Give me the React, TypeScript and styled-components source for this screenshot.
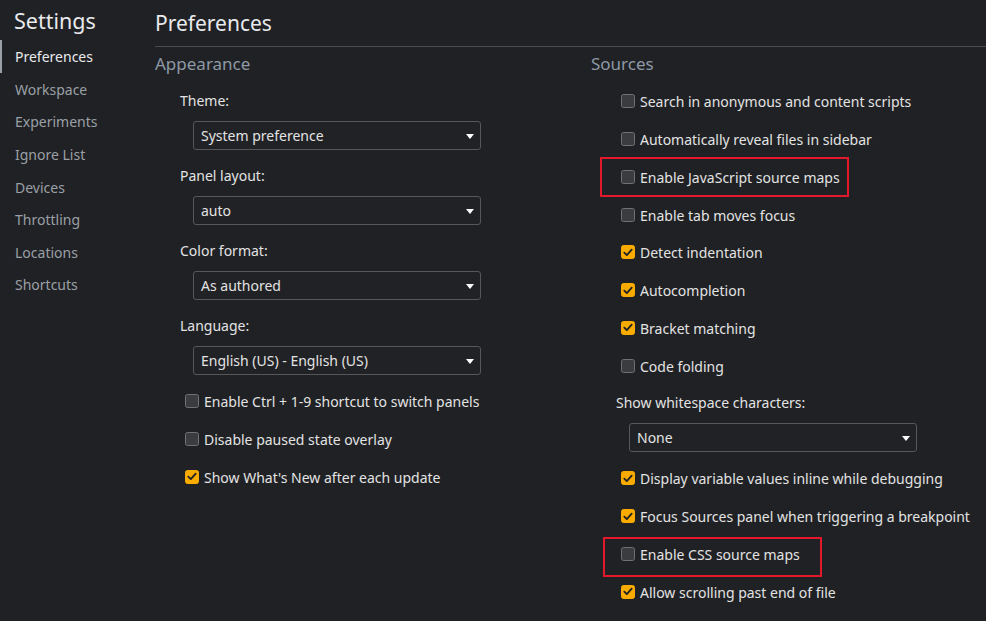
import React from "react";
import styled, { createGlobalStyle } from "styled-components";

const FONT = `"Noto Sans", "Open Sans", sans-serif`;

const Global = createGlobalStyle`
  html, body { margin: 0; padding: 0; background: #202124; }
  body { font-family: ${FONT}; color: #e3e3e3; overflow: hidden; }
  * { box-sizing: border-box; }
`;

const Page = styled.div`
  display: flex;
  width: 986px;
  height: 621px;
  background: #202124;
  overflow: hidden;
`;

const Sidebar = styled.nav`
  width: 155px;
  flex: none;
  display: flex;
  flex-direction: column;
`;

const SidebarTitle = styled.div`
  height: 40px;
  padding-left: 14px;
  font-size: 21.5px;
  line-height: 42px;
  color: #e8eaed;
`;

const NavItem = styled.div<{ $active?: boolean }>`
  height: 32.57px;
  display: flex;
  align-items: center;
  padding-left: 13px;
  padding-top: 1px;
  font-size: 14px;
  color: ${(p) => (p.$active ? "#e8eaed" : "#9aa0a6")};
  border-left: 2px solid ${(p) => (p.$active ? "#9aa0a6" : "transparent")};
`;

const Main = styled.main`
  flex: 1;
  display: flex;
  flex-direction: column;
`;

const Header = styled.div`
  height: 47px;
  border-bottom: 1px solid #4a4c50;
  font-size: 21px;
  line-height: 46px;
  color: #e8eaed;
`;

const Columns = styled.div`
  display: grid;
  grid-template-columns: 436px 1fr;
`;

const Column = styled.section`
  display: flex;
  flex-direction: column;
`;

const SectionTitle = styled.div`
  height: 34px;
  font-size: 17px;
  line-height: 34px;
  color: #8d99a6;
`;

const FieldLabel = styled.div<{ $top: number }>`
  margin-top: ${(p) => p.$top}px;
  margin-left: 25px;
  height: 20px;
  line-height: 20px;
  font-size: 14px;
  color: #e3e3e3;
`;

const SelectBox = styled.div<{ $indent: number }>`
  margin-top: 10px;
  margin-left: ${(p) => p.$indent}px;
  width: 288px;
  height: 29px;
  border: 1px solid #55575b;
  border-radius: 3px;
  background: #212225;
  display: flex;
  align-items: center;
  justify-content: space-between;
  padding: 0 6px 0 7px;
  font-size: 14px;
  color: #e3e3e3;
`;

const Arrow = styled.span`
  width: 0;
  height: 0;
  border-left: 4px solid transparent;
  border-right: 4px solid transparent;
  border-top: 5px solid #ffffff;
  margin-top: 1px;
`;

const CheckList = styled.div<{ $top: number }>`
  margin-top: ${(p) => p.$top}px;
  display: flex;
  flex-direction: column;
`;

const Row = styled.label`
  position: relative;
  height: 37.75px;
  display: flex;
  align-items: center;
  padding-left: 30px;
  font-size: 14px;
  color: #e3e3e3;
  white-space: nowrap;
`;

const RowText = styled.span`
  padding-top: 2px;
`;

const Box = styled.span<{ $checked?: boolean }>`
  width: 14px;
  height: 14px;
  flex: none;
  margin-right: 5px;
  margin-top: 1px;
  border-radius: 2.5px;
  border: 1px solid ${(p) => (p.$checked ? "#f9ab00" : "#6f7175")};
  background: ${(p) => (p.$checked ? "#f9ab00" : "#3b3c3f")};
  display: flex;
  align-items: center;
  justify-content: center;
`;

const Highlight = styled.span`
  position: absolute;
  border: 2px solid #e3192b;
  pointer-events: none;
`;

type Hl = { left: number; top: number; width: number; height: number };

function Check({
  label,
  checked,
  hl,
}: {
  label: string;
  checked?: boolean;
  hl?: Hl;
}) {
  return (
    <Row>
      <Box $checked={checked}>
        {checked && (
          <svg width="10" height="9" viewBox="0 0 10 9">
            <path
              d="M1.3 4.6 L3.8 7.1 L8.7 1.6"
              fill="none"
              stroke="#202124"
              strokeWidth="1.8"
              strokeLinecap="round"
              strokeLinejoin="round"
            />
          </svg>
        )}
      </Box>
      <RowText>{label}</RowText>
      {hl && <Highlight style={hl} />}
    </Row>
  );
}

function Select({ value, indent }: { value: string; indent: number }) {
  return (
    <SelectBox $indent={indent}>
      <span>{value}</span>
      <Arrow />
    </SelectBox>
  );
}

const nav = [
  "Preferences",
  "Workspace",
  "Experiments",
  "Ignore List",
  "Devices",
  "Throttling",
  "Locations",
  "Shortcuts",
];

export default function App() {
  return (
    <>
      <Global />
      <Page>
        <Sidebar>
          <SidebarTitle>Settings</SidebarTitle>
          {nav.map((n, i) => (
            <NavItem key={n} $active={i === 0}>
              {n}
            </NavItem>
          ))}
        </Sidebar>
        <Main>
          <Header>Preferences</Header>
          <Columns>
            <Column>
              <SectionTitle>Appearance</SectionTitle>
              <FieldLabel $top={10}>Theme:</FieldLabel>
              <Select value="System preference" indent={38} />
              <FieldLabel $top={16}>Panel layout:</FieldLabel>
              <Select value="auto" indent={38} />
              <FieldLabel $top={16}>Color format:</FieldLabel>
              <Select value="As authored" indent={38} />
              <FieldLabel $top={16}>Language:</FieldLabel>
              <Select value="English (US) - English (US)" indent={38} />
              <CheckList $top={7}>
                <Check label="Enable Ctrl + 1-9 shortcut to switch panels" />
                <Check label="Disable paused state overlay" />
                <Check label="Show What's New after each update" checked />
              </CheckList>
            </Column>
            <Column>
              <SectionTitle>Sources</SectionTitle>
              <CheckList $top={1}>
                <Check label="Search in anonymous and content scripts" />
                <Check label="Automatically reveal files in sidebar" />
                <Check
                  label="Enable JavaScript source maps"
                  hl={{ left: 9, top: -1, width: 249, height: 40 }}
                />
                <Check label="Enable tab moves focus" />
                <Check label="Detect indentation" checked />
                <Check label="Autocompletion" checked />
                <Check label="Bracket matching" checked />
                <Check label="Code folding" />
              </CheckList>
              <FieldLabel $top={9}>Show whitespace characters:</FieldLabel>
              <Select value="None" indent={38} />
              <CheckList $top={7}>
                <Check label="Display variable values inline while debugging" checked />
                <Check label="Focus Sources panel when triggering a breakpoint" checked />
                <Check
                  label="Enable CSS source maps"
                  hl={{ left: 12, top: 2, width: 219, height: 40 }}
                />
                <Check label="Allow scrolling past end of file" checked />
              </CheckList>
            </Column>
          </Columns>
        </Main>
      </Page>
    </>
  );
}
